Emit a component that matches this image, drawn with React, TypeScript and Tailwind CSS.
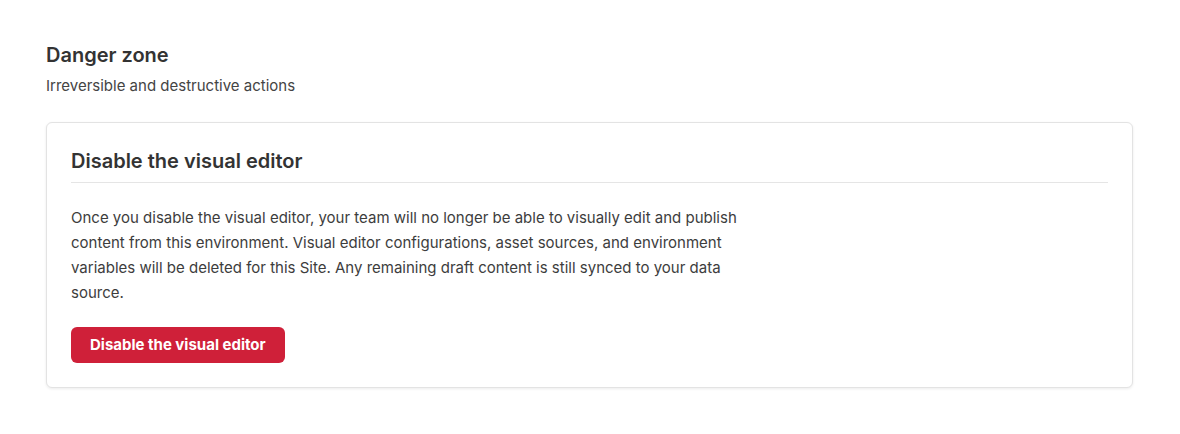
import React from "react";

const DangerZone: React.FC = () => {
  return (
    <div className="bg-white min-h-[434px] w-full px-[46px] pt-[42px] text-[#333] font-['Inter','Liberation_Sans',sans-serif]">
      <h2 className="text-[20px] leading-[26px] font-semibold text-[#333]">Danger zone</h2>
      <p className="mt-[8px] text-[15px] leading-[20px] text-[#444]">Irreversible and destructive actions</p>

      <div className="mt-[26px] w-[1087px] rounded-md border border-[#e3e3e3] bg-white px-[24px] pt-[24px] pb-[24px] shadow-[0_1px_3px_rgba(0,0,0,0.08)]">
        <h3 className="text-[20px] leading-[28px] font-semibold text-[#333] pb-[7px] border-b border-[#e5e5e5]">
          Disable the visual editor
        </h3>
        <p className="mt-[22px] max-w-[700px] text-[15px] leading-[25px] text-[#3d3d3d]">
          Once you disable the visual editor, your team will no longer be able to visually edit and publish content
          from this environment. Visual editor configurations, asset sources, and environment variables will be
          deleted for this Site. Any remaining draft content is still synced to your data source.
        </p>
        <button
          onClick={() => {}}
          className="mt-[22px] h-[36px] px-[19px] rounded-md bg-[#cf2039] text-white text-[15px] font-bold"
        >
          Disable the visual editor
        </button>
      </div>
    </div>
  );
};

export default function App() {
  return <DangerZone />;
}
